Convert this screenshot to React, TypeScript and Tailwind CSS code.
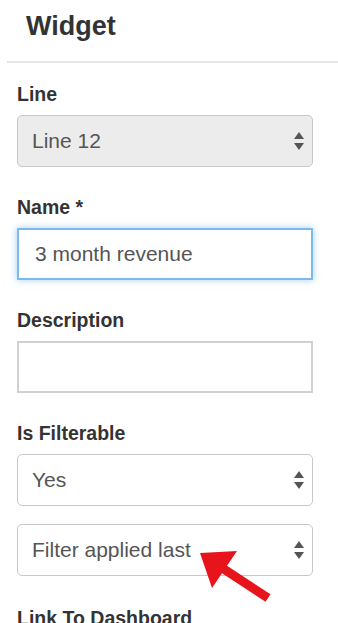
import { ReactNode } from "react";

const SelectArrows = () => (
  <svg width="10" height="19" viewBox="0 0 10 19" className="shrink-0">
    <polygon points="5,0 10,7 0,7" fill="#555" />
    <polygon points="0,11 10,11 5,18" fill="#555" />
  </svg>
);

const Label = ({ children }: { children: ReactNode }) => (
  <div className="mb-[9px] h-6 text-[19.5px] leading-6 font-bold text-[#333]">{children}</div>
);

const Select = ({ value, disabled }: { value: string; disabled?: boolean }) => (
  <div
    className={`flex h-[52px] items-center justify-between rounded-[5px] border border-[#c8c8c8] pl-[14px] pr-[8px] text-[21px] text-[#555] ${
      disabled ? "bg-[#ececec]" : "bg-white"
    }`}
  >
    <span>{value}</span>
    <SelectArrows />
  </div>
);

export default function App() {
  return (
    <div className="relative min-h-[623px] bg-white font-['Liberation_Sans',Arial,sans-serif]">
      <div className="pl-[26px] pt-[11px] h-[30px] box-content text-[27px] leading-[30px] font-bold text-[#333]">
        Widget
      </div>
      <div className="ml-[7px] mt-[20px] border-t-2 border-[#e6e6e6]" />

      <div className="pl-[17px] pr-[25px] pt-[19px] flex flex-col gap-[28px]">
        <div>
          <Label>Line</Label>
          <Select value="Line 12" disabled />
        </div>
        <div>
          <Label>Name *</Label>
          <div className="flex h-[52px] items-center border-2 border-[#7cb9ec] pl-[16px] text-[21px] text-[#555] shadow-[0_0_7px_rgba(102,175,233,0.6)]">
            3 month revenue
          </div>
        </div>
        <div>
          <Label>Description</Label>
          <div className="h-[52px] border-2 border-[#d0d0d0]" />
        </div>
        <div>
          <Label>Is Filterable</Label>
          <div className="flex flex-col gap-[18px]">
            <Select value="Yes" />
            <Select value="Filter applied last" />
          </div>
        </div>
        <div className="pt-[2px]">
          <Label>Link To Dashboard</Label>
          <Select value="None" />
        </div>
      </div>

      <svg className="pointer-events-none absolute left-0 top-0" width="338" height="623">
        <polygon
          points="200,553 237,551 227,565.7 270.5,594.2 265.5,601.8 222,573.3 212,588"
          fill="#e8141c"
        />
      </svg>
    </div>
  );
}
